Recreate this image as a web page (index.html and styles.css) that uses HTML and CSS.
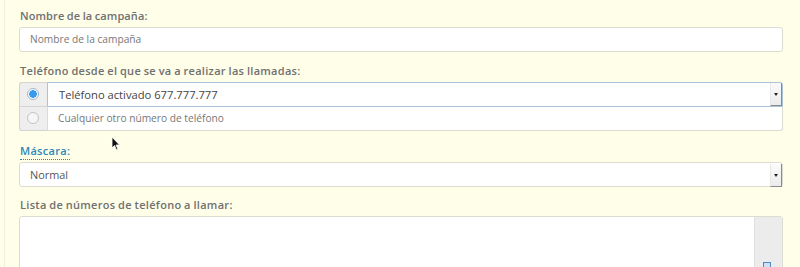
FILE: index.html
```html
<!DOCTYPE html>
<html lang="es">
<head>
<meta charset="utf-8">
<link rel="stylesheet" href="styles.css">
</head>
<body>
<div class="panel">
  <div class="field">
    <label class="lbl first">Nombre de la campaña:</label>
    <div class="input placeholder">Nombre de la campaña</div>
  </div>
  <div class="field">
    <label class="lbl">Teléfono desde el que se va a realizar las llamadas:</label>
    <div class="group">
      <div class="grow">
        <span class="addon"><span class="radio on"></span></span>
        <div class="input sel focus"><span class="txt">Teléfono activado 677.777.777</span><span class="arrow"></span></div>
      </div>
      <div class="grow">
        <span class="addon"><span class="radio"></span></span>
        <div class="input placeholder">Cualquier otro número de teléfono</div>
      </div>
    </div>
  </div>
  <div class="field mask">
    <label class="lbl"><span class="tip">Máscara:</span></label>
    <div class="input sel"><span class="txt">Normal</span><span class="arrow"></span></div>
  </div>
  <div class="field list">
    <label class="lbl">Lista de números de teléfono a llamar:</label>
    <div class="textarea"><div class="ta-body"></div><div class="ta-side"><span class="ta-icon"></span></div></div>
  </div>
  <svg class="cursor" width="10" height="15" viewBox="0 0 10 15"><path d="M1 1 L1 12 L3.5 9.5 L5.5 14 L7 13.3 L5 9 L8.5 9 Z" fill="#111" stroke="#fff" stroke-width="0.8"/></svg>
</div>
</body>
</html>
```
FILE: styles.css
```css
html, body { margin: 0; padding: 0; }
body {
  background: #fefee9;
  font-family: "Open Sans", "Noto Sans", sans-serif;
  width: 800px;
  height: 267px;
  overflow: hidden;
}
.panel {
  position: relative;
  padding: 9px 17px 0 14px;
  border-left: 1px solid #f0f0dc;
  margin-left: 4px;
}
.field { display: flex; flex-direction: column; }
.field + .field { margin-top: 12px; }
.lbl {
  display: block;
  font-size: 11px;
  line-height: 14px;
  margin-bottom: 4px;
  font-weight: 600;
  color: #707070;
  letter-spacing: 0.3px;
  word-spacing: -0.5px;
  padding-left: 1px;
}
.lbl.first { word-spacing: -0.5px; letter-spacing: 0.1px; }
.input {
  box-sizing: border-box;
  height: 25px;
  background: #fff;
  border: 1px solid #dcdcd0;
  border-radius: 3px;
  font-size: 10.2px;
  line-height: 23px;
  padding-left: 10px;
  color: #555;
  display: flex;
  align-items: center;
}
.placeholder { color: #777; }
.group { display: flex; flex-direction: column; }
.grow { display: flex; height: 24.5px; }
.grow .input { flex: 1; height: 24.5px; border-radius: 0 3px 3px 0; }
.grow:first-child .input { border-radius: 0 3px 0 0; }
.grow:last-child .input { border-radius: 0 0 3px 0; }
.grow + .grow .addon { border-top: none; }
.grow + .grow .input { border-top: none; }
.addon {
  box-sizing: border-box;
  width: 28px;
  background: #eeeeee;
  border: 1px solid #d4d4d0;
  border-right: none;
  display: flex;
  align-items: center;
  justify-content: center;
  padding-right: 2px;
}
.grow:first-child .addon { border-radius: 3px 0 0 0; }
.grow:last-child .addon { border-radius: 0 0 0 3px; }
.radio {
  box-sizing: border-box;
  width: 12px;
  height: 12px;
  border-radius: 50%;
  border: 1px solid #c4c4c4;
  background: #f6f6f6;
}
.radio.on {
  border: 1px solid #9fb6cc;
  background: radial-gradient(circle, #3a9aec 0 3.6px, #fff 4px);
}
.focus { border-color: #a9c3dc; }
.sel { justify-content: space-between; padding-right: 0; font-size: 10.9px; }
.sel.focus { font-size: 11.2px; }
.sel.focus .txt { padding-left: 1px; color: #444; }
.sel .txt { color: #555; }
.arrow {
  box-sizing: border-box;
  width: 12px;
  height: 23px;
  border-left: 1px solid #e8e8e8;
  border-right: 1px solid #8a8a8a;
  border-bottom: 1px solid #8a8a8a;
  background: linear-gradient(#fafafa, #ececec);
  position: relative;
  margin-top: 1px;
}
.arrow::after {
  content: "";
  position: absolute;
  left: 3px;
  top: 10px;
  border-left: 2.5px solid transparent;
  border-right: 2.5px solid transparent;
  border-top: 3px solid #222;
}
.field.mask { margin-top: 13px; }
.tip {
  color: #2e86b9;
  border-bottom: 1px dotted #2e86b9;
  padding-bottom: 1px;
}
.field.list { margin-top: 11px; }
.textarea {
  box-sizing: border-box;
  height: 60px;
  border: 1px solid #dcdcd0;
  border-radius: 3px;
  background: #fff;
  display: flex;
}
.ta-body { flex: 1; }
.ta-side {
  width: 27px;
  background: #ececec;
  border-left: 1px solid #e0e0e0;
  position: relative;
}
.ta-icon {
  position: absolute;
  left: 8px;
  top: 45px;
  width: 8px;
  height: 8px;
  border: 1px solid #4a8ac8;
  background: #cfe2f5;
  box-sizing: border-box;
}
.cursor { position: absolute; left: 106px; top: 136px; }
```
